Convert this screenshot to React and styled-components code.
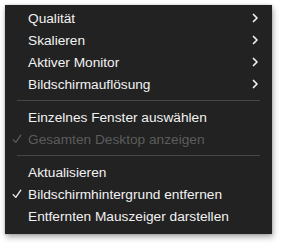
import React from 'react';
import styled, { createGlobalStyle } from 'styled-components';

const GlobalStyle = createGlobalStyle`
    html, body {
        margin: 0;
        padding: 0;
        background: #ffffff;
    }
    body {
        font-family: "Liberation Sans", Arial, sans-serif;
    }
`;

const Page = styled.div`
    width: 281px;
    height: 243px;
    padding: 5px 9px 9px 5px;
    box-sizing: border-box;
`;

const Menu = styled.div`
    width: 267px;
    background: #222222;
    box-shadow: 1px 3px 6px rgba(0, 0, 0, 0.35), 0 0 2px rgba(0, 0, 0, 0.2);
    padding: 2px 0 7px;
    box-sizing: border-box;
`;

const Item = styled.div`
    height: 22px;
    display: flex;
    align-items: center;
    padding: 0 13px 0 7px;
    font-size: 13.7px;
    color: ${p => (p.disabled ? '#5c5c5c' : '#f2f2f2')};
`;

const Check = styled.span`
    width: 16px;
    display: flex;
    align-items: center;
`;

const Label = styled.span`
    flex: 1;
    white-space: nowrap;
`;

const Separator = styled.div`
    height: 1px;
    background: #474747;
    margin: 5px 12px;
`;

const Chevron = () => (
    <svg width="7" height="10" viewBox="0 0 7 10">
        <path d="M1.5 1.5 L5 5 L1.5 8.5" fill="none" stroke="#f0f0f0" strokeWidth="1.7" strokeLinecap="round" strokeLinejoin="round" />
    </svg>
);

const CheckMark = ({ color }) => (
    <svg width="10" height="10" viewBox="0 0 10 10">
        <path d="M1.2 5.6 L3.8 8.4 L8.8 1.2" fill="none" stroke={color} strokeWidth="1.3" strokeLinecap="round" strokeLinejoin="round" />
    </svg>
);

const groups = [
    [
        { label: 'Qualität', sub: true },
        { label: 'Skalieren', sub: true },
        { label: 'Aktiver Monitor', sub: true },
        { label: 'Bildschirmauflösung', sub: true },
    ],
    [
        { label: 'Einzelnes Fenster auswählen' },
        { label: 'Gesamten Desktop anzeigen', checked: true, disabled: true },
    ],
    [
        { label: 'Aktualisieren' },
        { label: 'Bildschirmhintergrund entfernen', checked: true },
        { label: 'Entfernten Mauszeiger darstellen' },
    ],
];

function App() {
    return (
        <>
            <GlobalStyle />
            <Page>
                <Menu>
                    {groups.map((group, gi) => (
                        <React.Fragment key={gi}>
                            {gi > 0 && <Separator />}
                            {group.map(item => (
                                <Item key={item.label} disabled={item.disabled}>
                                    <Check>
                                        {item.checked && <CheckMark color={item.disabled ? '#5c5c5c' : '#f2f2f2'} />}
                                    </Check>
                                    <Label>{item.label}</Label>
                                    {item.sub && <Chevron />}
                                </Item>
                            ))}
                        </React.Fragment>
                    ))}
                </Menu>
            </Page>
        </>
    );
}

export default App;
